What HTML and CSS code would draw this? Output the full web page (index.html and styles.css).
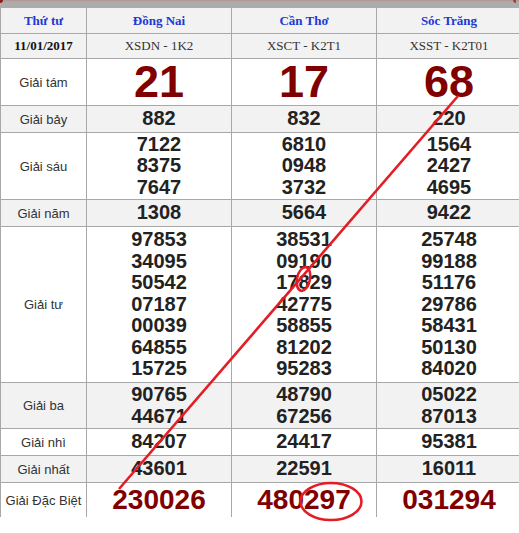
FILE: index.html
```html
<!DOCTYPE html>
<html lang="vi">
<head>
<meta charset="utf-8">
<title>Kết quả xổ số 11/01/2017</title>
<link rel="stylesheet" href="styles.css">
</head>
<body>
<div class="page">
  <div class="band"></div>
  <div class="board">
    <div class="cell head">Thứ tư</div>
    <div class="cell head">Đồng Nai</div>
    <div class="cell head">Cần Thơ</div>
    <div class="cell head">Sóc Trăng</div>

    <div class="cell alt date">11/01/2017</div>
    <div class="cell alt code">XSDN - 1K2</div>
    <div class="cell alt code">XSCT - K2T1</div>
    <div class="cell alt code">XSST - K2T01</div>

    <div class="cell label">Giải tám</div>
    <div class="cell big">21</div>
    <div class="cell big">17</div>
    <div class="cell big">68</div>

    <div class="cell alt label">Giải bảy</div>
    <div class="cell alt num">882</div>
    <div class="cell alt num">832</div>
    <div class="cell alt num">220</div>

    <div class="cell label">Giải sáu</div>
    <div class="cell num"><span>7122</span><span>8375</span><span>7647</span></div>
    <div class="cell num"><span>6810</span><span>0948</span><span>3732</span></div>
    <div class="cell num"><span>1564</span><span>2427</span><span>4695</span></div>

    <div class="cell alt label">Giải năm</div>
    <div class="cell alt num">1308</div>
    <div class="cell alt num">5664</div>
    <div class="cell alt num">9422</div>

    <div class="cell label">Giải tư</div>
    <div class="cell num"><span>97853</span><span>34095</span><span>50542</span><span>07187</span><span>00039</span><span>64855</span><span>15725</span></div>
    <div class="cell num"><span>38531</span><span>09190</span><span>17829</span><span>42775</span><span>58855</span><span>81202</span><span>95283</span></div>
    <div class="cell num"><span>25748</span><span>99188</span><span>51176</span><span>29786</span><span>58431</span><span>50130</span><span>84020</span></div>

    <div class="cell alt label">Giải ba</div>
    <div class="cell alt num"><span>90765</span><span>44671</span></div>
    <div class="cell alt num"><span>48790</span><span>67256</span></div>
    <div class="cell alt num"><span>05022</span><span>87013</span></div>

    <div class="cell label">Giải nhì</div>
    <div class="cell num">84207</div>
    <div class="cell num">24417</div>
    <div class="cell num">95381</div>

    <div class="cell alt label">Giải nhất</div>
    <div class="cell alt num">43601</div>
    <div class="cell alt num">22591</div>
    <div class="cell alt num">16011</div>

    <div class="cell label">Giải Đặc Biệt</div>
    <div class="cell special">230026</div>
    <div class="cell special">480297</div>
    <div class="cell special">031294</div>
  </div>

  <svg class="marks" width="519" height="533" viewBox="0 0 519 533" aria-hidden="true">
    <line x1="458" y1="96" x2="119" y2="489" />
    <ellipse cx="303.5" cy="279" rx="6.5" ry="12" transform="rotate(12 303.5 279)" />
    <ellipse cx="331" cy="501.5" rx="30.5" ry="18.5" />
  </svg>
</div>
</body>
</html>
```

FILE: styles.css
```css
html, body {
  margin: 0;
  padding: 0;
  background: #ffffff;
}

.page {
  position: relative;
  width: 519px;
  height: 533px;
  overflow: hidden;
}

.band {
  position: relative;
  height: 8px;
  background: linear-gradient(#b98a8a 0, #b0a4a4 1px, #acacac 2px, #acacac 100%);
}

.band::before {
  content: "";
  position: absolute;
  left: 0;
  top: 0;
  width: 3px;
  height: 3px;
  background: #8e1a1a;
  border-bottom-right-radius: 3px;
}

.band::after {
  content: "";
  position: absolute;
  right: 3px;
  top: 0;
  width: 3px;
  height: 3px;
  background: #a04040;
  border-bottom-left-radius: 3px;
}

.board {
  display: grid;
  width: 520px;
  grid-template-columns: 85px 144px 144px 144px;
  grid-template-rows: 25px 24px 46px 26px 66px 26px 155px 45px 26px 26px 34px;
  gap: 1px;
  padding: 0 1px;
  background: #a8a8a8;
}

.cell {
  display: flex;
  flex-direction: column;
  align-items: center;
  justify-content: center;
  background: #ffffff;
  text-align: center;
  white-space: nowrap;
}

.head,
.alt {
  background: #f2f2f2;
}

.head {
  font-family: "Liberation Serif", "Times New Roman", serif;
  font-weight: bold;
  font-size: 13px;
  color: #2138d4;
}

.date {
  font-family: "Liberation Serif", "Times New Roman", serif;
  font-weight: bold;
  font-size: 13px;
  color: #111111;
}

.code {
  font-family: "Liberation Serif", "Times New Roman", serif;
  font-size: 13px;
  color: #333333;
}

.label {
  font-family: "Liberation Sans", Arial, sans-serif;
  font-size: 13px;
  color: #333333;
}

.num {
  font-family: "Liberation Sans", Arial, sans-serif;
  font-weight: bold;
  font-size: 20px;
  line-height: 21.6px;
  color: #222222;
}

.num span {
  display: block;
}

.big {
  font-family: "Liberation Sans", Arial, sans-serif;
  font-weight: bold;
  font-size: 45px;
  line-height: 46px;
  color: #800000;
}

.special {
  font-family: "Liberation Sans", Arial, sans-serif;
  font-weight: bold;
  font-size: 28px;
  line-height: 32px;
  color: #800000;
}

.marks {
  position: absolute;
  left: 0;
  top: 0;
  pointer-events: none;
}

.marks line,
.marks ellipse {
  fill: none;
  stroke: #e41c24;
  stroke-width: 2.6;
}
```
